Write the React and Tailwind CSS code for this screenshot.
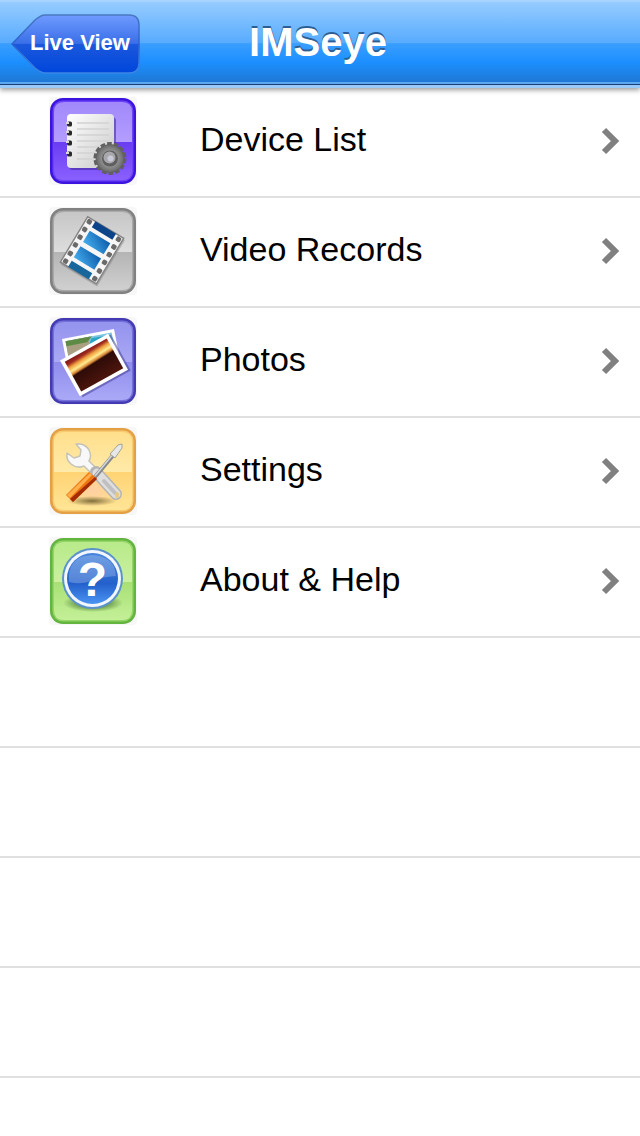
const EMPTY_ROWS = 4;

function Tile({ id, border, inner, top, bottom, children }) {
  return (
    <svg viewBox="0 0 88 88" className="size-22 shrink-0" aria-hidden="true">
      <defs>
        <linearGradient id={`${id}-top`} x1="0" y1="0" x2="0" y2="1">
          <stop offset="0" stopColor={top[0]} />
          <stop offset="1" stopColor={top[1]} />
        </linearGradient>
        <linearGradient id={`${id}-bottom`} x1="0" y1="0" x2="0" y2="1">
          <stop offset="0" stopColor={bottom[0]} />
          <stop offset="1" stopColor={bottom[1]} />
        </linearGradient>
      </defs>
      <rect width="88" height="88" rx="4" fill="#f7f7f7" />
      <rect x="1" y="1" width="86" height="86" rx="13" fill={border} />
      <rect x="3.5" y="3.5" width="81" height="81" rx="10.5" fill={inner} />
      <path d="M5 45V15Q5 5 15 5H73Q83 5 83 15V45Z" fill={`url(#${id}-top)`} />
      <path d="M5 45H83V73Q83 83 73 83H15Q5 83 5 73Z" fill={`url(#${id}-bottom)`} />
      {children}
    </svg>
  );
}

function DeviceIcon() {
  return (
    <Tile
      id="device"
      border="#3c14e0"
      inner="#6c43f5"
      top={["#a088fb", "#b49dff"]}
      bottom={["#6a3cf2", "#8a60ff"]}
    >
      <defs>
        <linearGradient id="page" x1="0" y1="0" x2="1" y2="1">
          <stop offset="0" stopColor="#ffffff" />
          <stop offset="1" stopColor="#c9c9c9" />
        </linearGradient>
        <radialGradient id="gear">
          <stop offset="0.4" stopColor="#a0a0a0" />
          <stop offset="1" stopColor="#686868" />
        </radialGradient>
      </defs>
      <rect x="20" y="20" width="47" height="53" rx="4" fill="#3a2590" opacity="0.55" />
      <rect x="18" y="17" width="47" height="54" rx="4" fill="url(#page)" />
      <path
        d="M28 26H60M28 32H60M28 38H60M28 44H60M28 50H56M28 56H46M28 62H44"
        stroke="#d2d2d2"
        strokeWidth="1.5"
      />
      {[27, 36, 46, 57].map((y) => (
        <g key={y}>
          <rect x="18" y={y - 2.5} width="5" height="5" rx="1.5" fill="#2a2a2a" />
          <path d={`M17 ${y - 1}H20`} stroke="#d8d8d8" strokeWidth="2" />
        </g>
      ))}
      <circle cx="61" cy="61.5" r="15" fill="none" stroke="#606060" strokeWidth="3" strokeDasharray="4.7 2.03" />
      <circle cx="61" cy="61.5" r="14" fill="url(#gear)" stroke="#606060" />
      <circle cx="61" cy="61.5" r="8" fill="#5e5e5e" />
      <circle cx="60.5" cy="60.5" r="6" fill="#a8a8ac" />
      <circle cx="61.5" cy="61.5" r="3" fill="#c9cbd8" />
    </Tile>
  );
}

function VideoIcon() {
  return (
    <Tile
      id="video"
      border="#818181"
      inner="#a8a8a8"
      top={["#c6c6c6", "#dddddd"]}
      bottom={["#b4b4b4", "#d0d0d0"]}
    >
      <defs>
        <linearGradient id="frame" x1="0" y1="1" x2="1" y2="0">
          <stop offset="0" stopColor="#45adee" />
          <stop offset="1" stopColor="#0d5caa" />
        </linearGradient>
      </defs>
      <g transform="translate(38.7 9.7) rotate(31)">
        <rect x="2" y="1" width="42" height="54" fill="#777" opacity="0.4" />
        <rect width="42" height="53" fill="#f6f6f6" stroke="#858585" strokeWidth="1.5" />
        <rect x="9" y="0" width="24" height="7" fill="#0b4488" />
        <rect x="9" y="11" width="24" height="13" fill="url(#frame)" />
        <rect x="9" y="29" width="24" height="13" fill="url(#frame)" />
        <rect x="9" y="46" width="24" height="7" fill="#17669c" />
        {[1, 10, 19, 28, 38, 47].map((y) => (
          <g key={y} fill="#6a6a6a">
            <rect x="1.5" y={y} width="5" height="5" rx="1.5" />
            <rect x="35.5" y={y} width="5" height="5" rx="1.5" />
          </g>
        ))}
      </g>
    </Tile>
  );
}

function PhotosIcon() {
  return (
    <Tile
      id="photos"
      border="#443bb4"
      inner="#7470da"
      top={["#9493ee", "#aaa8f4"]}
      bottom={["#8f8cec", "#aaa9f7"]}
    >
      <defs>
        <linearGradient id="sunset" x1="0" y1="0" x2="0.08" y2="1">
          <stop offset="0" stopColor="#7d1717" />
          <stop offset="0.12" stopColor="#a02c20" />
          <stop offset="0.22" stopColor="#f0a040" />
          <stop offset="0.34" stopColor="#ffec90" />
          <stop offset="0.43" stopColor="#d98838" />
          <stop offset="0.49" stopColor="#2e0c08" />
          <stop offset="1" stopColor="#4a140c" />
        </linearGradient>
      </defs>
      <g transform="translate(13 22) rotate(-11)">
        <rect width="53" height="24" fill="#fff" />
        <rect x="3" y="3" width="47" height="21" fill="#7cc4e2" />
        <path d="M3 3H28L20 24H3Z" fill="#a8a080" />
        <path d="M3 3H30L24 8H3Z" fill="#5d8b45" />
        <path d="M29 5H42L38 10H26Z" fill="#2ba5c4" />
      </g>
      <g transform="translate(11 43.5) rotate(-29)">
        <rect x="2" y="2" width="55" height="41" fill="#39358c" opacity="0.5" />
        <rect width="55" height="41" fill="#fff" />
        <rect x="3.5" y="3.5" width="48" height="34" fill="url(#sunset)" />
      </g>
    </Tile>
  );
}

function SettingsIcon() {
  return (
    <Tile
      id="settings"
      border="#e3a044"
      inner="#f8cb70"
      top={["#ffdf8c", "#ffeaa8"]}
      bottom={["#ffd374", "#ffe596"]}
    >
      <defs>
        <radialGradient id="glow">
          <stop offset="0" stopColor="#ffcfa4" />
          <stop offset="1" stopColor="#ffcfa4" stopOpacity="0" />
        </radialGradient>
        <radialGradient id="floor">
          <stop offset="0" stopColor="#80703a" />
          <stop offset="1" stopColor="#80703a" stopOpacity="0" />
        </radialGradient>
      </defs>
      <ellipse cx="44" cy="63" rx="24" ry="18" fill="url(#glow)" />
      <ellipse cx="43" cy="74" rx="25" ry="5" fill="url(#floor)" />
      <path
        d="M27 17Q36 16 40 23Q43 29 40 34L48 42L43 47L35 39Q28 42 22 37Q17 33 18 26L25 31L31 29L32 23Z"
        fill="#f8f8f8"
        stroke="#c6c4b8"
        strokeWidth="1.5"
        strokeLinejoin="round"
      />
      <path d="M47 45L67 67" stroke="#b4b4b4" strokeWidth="12" strokeLinecap="round" />
      <path d="M48 46L67 67" stroke="#dedede" strokeWidth="9" strokeLinecap="round" />
      <path d="M55 54L66 66" stroke="#c0c0c0" strokeWidth="4" strokeLinecap="round" />
      <ellipse cx="68" cy="68" rx="2" ry="3" fill="#e8c982" />
      <path d="M46 50L66 26" stroke="#84888c" strokeWidth="4" />
      <path d="M46 49L65 26" stroke="#d4d6d8" strokeWidth="1.5" />
      <path d="M61 27L69 18L73 17L73 21L66 31Z" fill="#e8e8e8" stroke="#a2a29c" />
      <path d="M40 45L48 52L24 75L17 68Z" fill="#ee7610" />
      <path d="M41 46L43 48L21 71L18 68Z" fill="#ffb04a" />
      <path d="M46 50L48 52L24 75L21 72Z" fill="#a52c08" />
    </Tile>
  );
}

function HelpIcon() {
  return (
    <Tile
      id="help"
      border="#64b440"
      inner="#93d566"
      top={["#b8ea8a", "#caf0a0"]}
      bottom={["#a8e074", "#c4f098"]}
    >
      <defs>
        <linearGradient id="ball" x1="0" y1="0" x2="0" y2="1">
          <stop offset="0" stopColor="#4684dc" />
          <stop offset="0.6" stopColor="#2460cc" />
          <stop offset="1" stopColor="#4a94f2" />
        </linearGradient>
        <radialGradient id="help-shadow">
          <stop offset="0.4" stopColor="#5c8a42" />
          <stop offset="1" stopColor="#5c8a42" stopOpacity="0" />
        </radialGradient>
      </defs>
      <ellipse cx="44" cy="66" rx="30" ry="9" fill="url(#help-shadow)" />
      <circle cx="43.5" cy="41.5" r="30.5" fill="#5a92cc" />
      <circle cx="43.5" cy="41.5" r="28.5" fill="#f2f7ff" />
      <circle cx="43.5" cy="41.5" r="25.5" fill="url(#ball)" />
      <path d="M20 45Q18 19 43 18Q66 19 67 39Q52 40 42 44Q31 48 20 45Z" fill="#fff" opacity="0.22" />
      <text
        x="43.5"
        y="59"
        textAnchor="middle"
        fill="#fff"
        className="font-['Liberation_Sans',Arial,sans-serif] text-[48px] font-bold"
      >
        ?
      </text>
    </Tile>
  );
}

const menu = [
  { label: "Device List", href: "#devices", Icon: DeviceIcon },
  { label: "Video Records", href: "#videos", Icon: VideoIcon },
  { label: "Photos", href: "#photos", Icon: PhotosIcon },
  { label: "Settings", href: "#settings", Icon: SettingsIcon },
  { label: "About & Help", href: "#help", Icon: HelpIcon },
];

function BackButton() {
  return (
    <button
      type="button"
      className="relative h-15 w-[130px] cursor-pointer justify-self-start pb-1 pl-[19px] text-left text-[22px] font-bold text-white"
    >
      <svg viewBox="0 0 130 60" className="absolute inset-0 size-full" aria-hidden="true">
        <defs>
          <linearGradient id="back" x1="0" y1="0" x2="0" y2="1">
            <stop offset="0" stopColor="#6f9bff" />
            <stop offset="0.49" stopColor="#3a6fe8" />
            <stop offset="0.5" stopColor="#1b58dc" />
            <stop offset="1" stopColor="#0046dc" />
          </linearGradient>
          <linearGradient id="back-edge" x1="0" y1="0" x2="0" y2="1">
            <stop offset="0" stopColor="#4a78c0" />
            <stop offset="0.5" stopColor="#2a62cc" />
            <stop offset="1" stopColor="#3c86e6" />
          </linearGradient>
        </defs>
        <path
          d="M1 30L24 6Q30 1 34 1H118Q128 1 128 11V49Q128 59 118 59H34Q30 59 24 54Z"
          fill="url(#back)"
          stroke="url(#back-edge)"
          strokeWidth="1.5"
          strokeLinejoin="round"
        />
      </svg>
      <span className="relative">Live View</span>
    </button>
  );
}

function Chevron() {
  return (
    <svg viewBox="0 0 20 28" className="h-7 w-5 shrink-0" aria-hidden="true">
      <path d="M4 3L15 14L4 25" fill="none" stroke="#808080" strokeWidth="6" />
    </svg>
  );
}

export default function App() {
  return (
    <div className="min-h-screen bg-white font-['Liberation_Sans',Arial,sans-serif] text-black">
      <header className="relative shadow-[0_2px_5px_rgba(0,0,0,0.4)]">
        <div className="grid h-[82px] grid-cols-[1fr_auto_1fr] items-center border-t-2 border-[#a6d4ff] bg-linear-[180deg,#96ccff_0%,#58abff_51%,#3a9eff_52%,#1c8fff_75%,#1f78d4_100%] pt-1 pr-[15px] pl-[11px]">
          <BackButton />
          <h1 className="pb-1 text-[40px] leading-10 font-bold text-white [text-shadow:0_-2px_0_#2c5e94]">
            IMSeye
          </h1>
        </div>
        <div className="h-0.5 bg-[#5ba8f2]" />
        <div className="h-px bg-[#173d75]" />
        <div className="h-[3px] bg-[#9ccaf8]" />
      </header>

      <nav>
        <ul>
          {menu.map(({ label, href, Icon }) => (
            <li key={label} className="border-b-2 border-[#e0e0e0]">
              <a href={href} className="flex h-27 items-center pr-5 pb-0.5 pl-[49px]">
                <Icon />
                <span className="ml-[63px] flex-1 pb-1 text-[34px] leading-10">{label}</span>
                <Chevron />
              </a>
            </li>
          ))}
          {Array.from({ length: EMPTY_ROWS }, (_, i) => (
            <li key={i} className="h-[110px] border-b-2 border-[#e0e0e0]" />
          ))}
        </ul>
      </nav>
    </div>
  );
}
